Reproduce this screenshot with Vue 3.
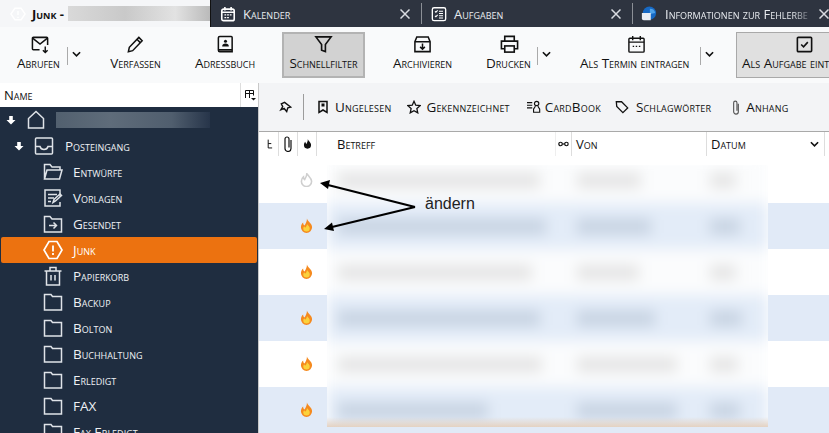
<script setup>
const tree = [
  { name: 'Entwürfe', icon: 'open' },
  { name: 'Vorlagen', icon: 'tpl' },
  { name: 'Gesendet', icon: 'sent' },
  { name: 'Junk', icon: 'junk', active: true },
  { name: 'Papierkorb', icon: 'trash' },
  { name: 'Backup', icon: 'folder' },
  { name: 'Bolton', icon: 'folder' },
  { name: 'Buchhaltung', icon: 'folder' },
  { name: 'Erledigt', icon: 'folder' },
  { name: 'FAX', icon: 'folder' },
  { name: 'Fax Erledigt', icon: 'folder' }
]
const rows = [0, 1, 2, 3, 4, 5]
const bars = [
  { s: 202, f: 64, d: 26, alt: false },
  { s: 208, f: 74, d: 30, alt: true },
  { s: 194, f: 62, d: 26, alt: false },
  { s: 202, f: 78, d: 32, alt: true },
  { s: 204, f: 100, d: 28, alt: false },
  { s: 150, f: 100, d: 30, alt: true }
]
</script>

<template>
  <div class="app">
    <header class="tabs">
      <div class="tab first">
        <svg class="ic" viewBox="0 0 18 18" fill="none" stroke="#fff" stroke-width="1.6"><path d="M5.5 2.5h7L17 9l-4.500 6.500h-7L1 9z"/><path d="M9 5.500v4.500M9 12v1.500"/></svg>
        <b>Junk -</b>
        <span class="smear"></span>
      </div>
      <div class="tab t2">
        <svg class="ic" viewBox="0 0 18 18" fill="none" stroke="#fff" stroke-width="1.800"><rect x="2" y="3.500" width="14" height="13" rx="2"/><path d="M5.500 1v4M12.500 1v4M2 7h14" /><path d="M5 10h2M8 10h2M11 10h2M5 13h2M8 13h2" stroke-width="1.500"/></svg>
        <span class="tname">Kalender</span>
        <svg class="x" viewBox="0 0 10 10" fill="none" stroke="#d8dbe0" stroke-width="1.500"><path d="M.5.5l9 9M9.500.5l-9 9"/></svg>
      </div>
      <div class="tab t3">
        <svg class="ic" viewBox="0 0 18 18" fill="none" stroke="#fff" stroke-width="1.500"><rect x="1.500" y="2" width="15" height="14.500" rx="2"/><path d="M4.500 6l1 1 2-2M9 6h4.500M4.500 11l1 1 2-2M9 11h4.500M9 8.500h4.500M9 13.500h4.500" stroke-width="1.200"/></svg>
        <span class="tname">Aufgaben</span>
        <svg class="x" viewBox="0 0 10 10" fill="none" stroke="#d8dbe0" stroke-width="1.500"><path d="M.5.5l9 9M9.500.5l-9 9"/></svg>
      </div>
      <div class="tab t4">
        <svg class="ic" viewBox="0 0 18 18"><circle cx="9.500" cy="8" r="7.500" fill="#1769c4"/><path d="M10 3a6 6 0 0 1 6 5l-6 1z" fill="#4fa3ea"/><path d="M1 8h10v8H3a2 2 0 0 1-2-2z" fill="#e9edf3"/></svg>
        <span class="tname fade">Informationen zur Fehlerbe</span>
        <svg class="x" viewBox="0 0 10 10" fill="none" stroke="#d8dbe0" stroke-width="1.500"><path d="M.5.5l9 9M9.500.5l-9 9"/></svg>
      </div>
    </header>

    <nav class="toolbar">
      <div class="tb tb-abrufen">
        <svg class="tbi" viewBox="0 0 20 20" fill="none" stroke="#111" stroke-width="1.600"><path d="M9 15.500H2.500a1 1 0 0 1-1-1V3.500a1 1 0 0 1 1-1h14a1 1 0 0 1 1 1v7"/><path d="M2 3.500l7.500 6 7.500-6"/><path d="M15 12v6M12.500 16l2.500 2.500 2.500-2.500" stroke-width="1.500"/></svg>
        <span>Abrufen</span>
      </div>
      <div class="drop"><svg viewBox="0 0 10 6" fill="none" stroke="#111" stroke-width="1.800"><path d="M1 1l4 4 4-4"/></svg></div>
      <div class="tb tb-verfassen">
        <svg class="tbi" viewBox="0 0 20 20" fill="none" stroke="#111" stroke-width="1.600"><path d="M13.500 2.500l3.500 3.500L7 16.500l-4.500 1 1-4.500zM11.500 4.500l3.500 3.500"/></svg>
        <span>Verfassen</span>
      </div>
      <div class="tb tb-adress">
        <svg class="tbi" viewBox="0 0 20 20" fill="none" stroke="#111" stroke-width="1.600"><path d="M4 1.500h12a1 1 0 0 1 1 1v15H4a1.500 1.500 0 0 1-1.500-1.500V3A1.500 1.500 0 0 1 4 1.500zM2.500 15.500h14.500"/><circle cx="10" cy="6.500" r="1.600" fill="#111" stroke="none"/><path d="M6.500 12c0-2 1.500-3 3.500-3s3.500 1 3.500 3z" fill="#111" stroke="none"/></svg>
        <span>Adressbuch</span>
      </div>
      <div class="tb tb-filter">
        <svg class="tbi" viewBox="0 0 20 20" fill="none" stroke="#111" stroke-width="1.700"><path d="M2 2h16l-6 8v7.500l-4-1.500V10z"/></svg>
        <span>Schnellfilter</span>
      </div>
      <div class="tb tb-arch">
        <svg class="tbi" viewBox="0 0 20 20" fill="none" stroke="#111" stroke-width="1.600"><path d="M4 2h12l2 5v10.500H2V7zM2 7h16"/><path d="M10 9v6M7.500 12.500l2.500 2.500 2.500-2.500"/></svg>
        <span>Archivieren</span>
      </div>
      <div class="tb tb-druck">
        <svg class="tbi" viewBox="0 0 20 20" fill="none" stroke="#111" stroke-width="1.700"><path d="M5 6V1.500h10V6M5 14.500H1.500V6.500h17v8H15"/><rect x="5" y="11.500" width="10" height="6.500"/></svg>
        <span>Drucken</span>
      </div>
      <div class="drop"><svg viewBox="0 0 10 6" fill="none" stroke="#111" stroke-width="1.800"><path d="M1 1l4 4 4-4"/></svg></div>
      <div class="tb tb-termin">
        <svg class="tbi" viewBox="0 0 20 20" fill="none" stroke="#111" stroke-width="1.500"><rect x="2" y="3.500" width="16" height="14.500" rx="1"/><path d="M6 1v4.500M14 1v4.500M2 7.500h16"/><path d="M6 12h1.500M9.200 12h1.500M12.500 12h1.500"/></svg>
        <span>Als Termin eintragen</span>
      </div>
      <div class="drop"><svg viewBox="0 0 10 6" fill="none" stroke="#111" stroke-width="1.800"><path d="M1 1l4 4 4-4"/></svg></div>
      <div class="tb tb-aufgabe">
        <svg class="tbi" viewBox="0 0 20 20" fill="none" stroke="#111" stroke-width="1.700"><rect x="2.500" y="2.500" width="15" height="15" rx="1"/><path d="M6.500 10l2.500 2.500 4.500-5"/></svg>
        <span>Als Aufgabe eint</span>
      </div>
    </nav>

    <main class="body">
      <aside class="side">
        <div class="side-head">
          <span>Name</span>
          <svg class="sh-ic" viewBox="0 0 12 12" fill="none" stroke="#111"><path d="M1.500 9V1.500h8v5M1.500 4.500h8M5.500 1.500v7.500"/><path d="M7 9h5l-2.500 2.500z" fill="#111" stroke="none"/></svg>
        </div>
        <div class="tree">
          <div class="node n0">
            <svg class="arrow" viewBox="0 0 10 10" fill="#fff"><path d="M3.200 1h3.600v4H9.500L5 9.500.5 5h2.700z"/></svg>
            <svg class="fi home" viewBox="0 0 20 20" fill="none" stroke="#dfe3e8" stroke-width="1.500"><path d="M2.500 18V8.500L10 1.500l7.500 7V18z"/></svg>
            <span class="acct"></span>
          </div>
          <div class="node n1">
            <svg class="arrow" viewBox="0 0 10 10" fill="#fff"><path d="M3.200 1h3.600v4H9.500L5 9.500.5 5h2.700z"/></svg>
            <svg class="fi" viewBox="0 0 20 20" fill="none" stroke="#dfe3e8" stroke-width="1.500"><rect x="1.500" y="2" width="17" height="16" rx="1"/><path d="M1.500 10.500H6c.5 2 2 3 4 3s3.500-1 4-3h4.500"/></svg>
            <span>Posteingang</span>
          </div>
          <div v-for="f in tree" :key="f.name" class="node n2" :class="{ active: f.active }">
            <svg class="fi" viewBox="0 0 20 20" fill="none" stroke="#dfe3e8" stroke-width="1.500">
              <template v-if="f.icon === 'open'"><path d="M1.500 17V2.500h5.500l2 2.500h8v3M1.500 17l2.500-9h15l-2.500 9z"/></template>
              <template v-else-if="f.icon === 'tpl'"><path d="M17 8.500V2H2v16h15v-4M5 6.500h9M5 10h6M5 13.500h3"/><path d="M10 14.500l1-3 6-5.500 1.500 1.500-6 5.500z"/></template>
              <template v-else-if="f.icon === 'sent'"><path d="M1.500 18V2.500h5.500l2 2.500h9.500v13z"/><path d="M6 11.500h7M10.500 8.500l3 3-3 3"/></template>
              <template v-else-if="f.icon === 'junk'"><path d="M6 1.500h8L19 10l-5 8.500H6L1 10z" stroke="#fff" stroke-width="1.700"/><path d="M10 5.500v6M10 13v2" stroke="#fff" stroke-width="1.800"/></template>
              <template v-else-if="f.icon === 'trash'"><path d="M1.500 5h17M7 5V1.500h6V5M3.500 5v14h13V5M8 9v5.500M12 9v5.500"/></template>
              <template v-else><path d="M1.500 18V2.500h6.500l1.500 2h9v13.500z"/></template>
            </svg>
            <span>{{ f.name }}</span>
          </div>
        </div>
      </aside>

      <section class="list">
        <div class="filter">
          <svg class="fb-pin" viewBox="0 0 14 14" fill="none" stroke="#111" stroke-width="1.500"><path d="M6 1.500l6.500 5-3 .8-1.200 4L5.500 8 2 9.500 4 6 2.500 3z"/></svg>
          <span class="fb-sep"></span>
          <div class="fb f1"><svg viewBox="0 0 14 14" fill="none" stroke="#111" stroke-width="1.500"><path d="M3 1.500h8v11l-4-2.500-4 2.500z"/><rect x="5.500" y="3.500" width="3" height="3" fill="#111" stroke="none"/></svg><span>Ungelesen</span></div>
          <div class="fb f2"><svg viewBox="0 0 16 16" fill="none" stroke="#111" stroke-width="1.500"><path d="M8 1.500l2 4.500 5 .5-3.700 3.300 1 4.900L8 12.300 3.700 14.700l1-4.900L1 6.500 6 6z"/></svg><span>Gekennzeichnet</span></div>
          <div class="fb f3"><svg viewBox="0 0 16 16" fill="none" stroke="#111" stroke-width="1.300"><path d="M0 3h6M0 6h6M0 9h6"/><circle cx="11" cy="4" r="2.500"/><path d="M9.500 6.500c0 2-2 3-2 4v3.500h7V10.500c0-1-2-2-2-4"/></svg><span>CardBook</span></div>
          <div class="fb f4"><svg viewBox="0 0 16 16" fill="none" stroke="#111" stroke-width="1.500"><path d="M1.500 2h6l7 7-5.500 5.500-7-7z"/></svg><span>Schlagwörter</span></div>
          <div class="fb f5"><svg viewBox="0 0 10 16" fill="none" stroke="#555" stroke-width="1.200"><path d="M7.500 4v8.500a2.500 2.500 0 0 1-5 0V3a1.700 1.700 0 0 1 3.500 0v8.500"/></svg><span>Anhang</span></div>
        </div>

        <div class="thead">
          <div class="th c-th"><svg viewBox="0 0 8 10" fill="none" stroke="#111" stroke-width="1.100"><path d="M2.500 0v9.500H7M2.500 4.500H6"/></svg></div>
          <div class="th c-cl"><svg viewBox="0 0 10 16" fill="none" stroke="#111" stroke-width="1.200"><path d="M8 4v8.500a3 3 0 0 1-6 0V3a2 2 0 0 1 4 0v8.500"/></svg></div>
          <div class="th c-fl"><svg viewBox="0 0 12 14" fill="#111"><path d="M6.500 0c.5 3 4.500 4.500 4.500 8.500a5 5 0 0 1-10 0C1 6.500 2 5 3 4c0 1.500.5 2.500 1.500 3C5.500 5 6.500 3 6.500 0z"/></svg></div>
          <div class="th c-su">Betreff</div>
          <div class="th c-gl"><svg viewBox="0 0 12 6" fill="none" stroke="#111" stroke-width="1.300"><circle cx="2.800" cy="3" r="1.900"/><circle cx="9.200" cy="3" r="1.900"/><path d="M4.700 3h2.600"/></svg></div>
          <div class="th c-vo">Von</div>
          <div class="th c-da">Datum
            <svg viewBox="0 0 10 6" fill="none" stroke="#111" stroke-width="1.800"><path d="M1 1l4 4 4-4"/></svg>
          </div>
        </div>

        <div class="rows">
          <div v-for="r in rows" :key="r" class="row" :class="{ alt: r % 2 === 1 }">
            <svg v-if="r === 0" class="flame" viewBox="0 0 14 16" fill="none" stroke="#cfcfcf" stroke-width="1.700"><path d="M7.500 1c.5 3.200 5 4.800 5 9a5.500 5.500 0 0 1-11 0c0-2.200 1-3.800 2.200-4.800 0 1.300.4 2.400 1.300 3C6.200 6.300 7.500 4 7.500 1z"/></svg>
            <svg v-else class="flame" viewBox="0 0 14 16"><path d="M7.500 .5c.5 3.400 5.500 5 5.500 9.500a6 6 0 0 1-12 0c0-2.400 1.100-4.100 2.400-5.200 0 1.400.4 2.600 1.400 3.200C6 6.300 7.500 4 7.500 .5z" fill="#f58a1f"/><path d="M7.500 6.500c1 1.500 3 2.500 3 4.500a3.500 3.500 0 0 1-7 0c0-1 .4-1.700 1-2.300.3.800.8 1.300 1.500 1.500.7-1 1.500-2.200 1.500-3.700z" fill="#fbd23c"/></svg>
          </div>
          <div class="veil">
            <div class="veil-in">
              <div v-for="(b, i) in bars" :key="i" class="vrow" :class="{ alt: b.alt }">
                <span class="vb vs" :style="{ width: b.s + 'px' }"></span>
                <span class="vb vf" :style="{ width: b.f + 'px' }"></span>
                <span class="vb vd" :style="{ width: b.d + 'px' }"></span>
              </div>
            </div>
          </div>
          <svg class="arrows" viewBox="0 0 130 100" fill="none" stroke="#000" stroke-width="2.300">
            <path d="M97 70L8 47.500M97 70L14 90" />
            <path d="M2 46l10-3-2 9zM6 92l8-6.500 2 8.500z" fill="#000" stroke="none"/>
          </svg>
          <span class="note">ändern</span>
        </div>
      </section>
    </main>
  </div>
</template>

<style>
html, body { margin: 0; overflow: hidden; background: #fff; }
</style>

<style scoped>
.app {
  width: 829px;
  height: 433px;
  overflow: hidden;
  display: flex;
  flex-direction: column;
  font-family: "Open Sans", "Noto Sans", sans-serif;
  font-variant: small-caps;
  font-size: 13px;
  color: #111;
}
.tabs { height: 27px; display: flex; background: #2e3440; color: #e8ebef; flex: none; }
.tab { width: 211px; flex: none; display: flex; align-items: center; box-sizing: border-box; position: relative; }
.tab.first { width: 210px; background: #f5f6f8; color: #111; padding-left: 10px; gap: 6px; }
.tab.first b { font-weight: 700; white-space: nowrap; }
.smear { width: 143px; height: 15px; flex: none; margin-left: -2px; background: linear-gradient(90deg, #d9d9d9, #c9c9c9 40%, #e2e2e2 75%, #b9b9b9); }
.ic { width: 16px; height: 16px; flex: none; }
.t2 { padding-left: 9px; border-left: 1px solid #111; }
.t3 { padding-left: 9px; border-left: 1px solid #8b8f96; margin-top: 3px; height: 21px; }
.t4 { padding-left: 8px; border-left: 1px solid #8b8f96; margin-top: 3px; height: 21px; width: 197px; }
.tname { margin-left: 7px; white-space: nowrap; }
.t4 .tname { margin-left: 8px; }
.fade { width: 150px; overflow: hidden; -webkit-mask-image: linear-gradient(90deg, #000 85%, transparent); mask-image: linear-gradient(90deg, #000 85%, transparent); }
.x { position: absolute; right: 11px; top: 50%; width: 10px; height: 10px; margin-top: -5px; }
.t4 .x { right: 0; }

.toolbar { height: 56px; flex: none; background: #f9fafb; display: flex; align-items: center; font-size: 13.5px; }
.tb { display: flex; flex-direction: column; align-items: center; box-sizing: border-box; height: 46px; white-space: nowrap; flex: none; padding-top: 3px; }
.tbi { width: 19px; height: 19px; }
.tb-filter { padding-top: 1px; }
.tb-aufgabe { padding-top: 2px; }
.drop { width: 14px; height: 18px; flex: none; margin-top: 2px; border-left: 1px solid #aaa; display: flex; align-items: flex-start; justify-content: flex-end; padding-top: 4px; box-sizing: border-box; }
.drop svg { width: 9px; height: 6px; }
.tb-abrufen { width: 50px; margin-left: 17px; align-items: flex-start; }
.tb-abrufen .tbi { margin-left: 14px; }
.tb-verfassen { margin-left: 29px; width: 51px; }
.tb-adress { margin-left: 33px; width: 62px; }
.tb-filter { margin-left: 26px; width: 83px; background: #d2d2d2; border: 2px solid #b3b3b3; }
.tb-arch { margin-left: 26px; width: 63px; }
.tb-druck { margin-left: 32px; width: 51px; align-items: flex-start; }
.tb-druck .tbi { margin-left: 14px; }
.tb-termin { margin-left: 29px; width: 120px; align-items: flex-start; }
.tb-termin .tbi { margin-left: 47px; }
.tb-aufgabe { margin-left: 22px; width: 120px; background: #e0e0e0; border: 1px solid #a9a9a9; align-items: flex-start; padding-left: 5px; }
.tb-aufgabe .tbi { margin-left: 53px; }

.body { flex: 1; display: flex; min-height: 0; }
.side { width: 258px; flex: none; display: flex; flex-direction: column; background: #1f2d40; }
.side-head { height: 24px; flex: none; background: #fff; display: flex; align-items: center; justify-content: space-between; padding-left: 4px; padding-right: 2px; box-sizing: border-box; position: relative; }
.side-head::after { content: ""; position: absolute; left: 240px; top: 0; bottom: 0; width: 1px; background: #ddd; }
.sh-ic { width: 12px; height: 12px; }
.tree { color: #eef1f4; flex: 1; font-size: 13.5px; }
.node { height: 26px; display: flex; align-items: center; white-space: nowrap; box-sizing: border-box; }
.n0 { padding-left: 6px; }
.n1 { padding-left: 14px; }
.n2 { padding-left: 43px; }
.arrow { width: 10px; height: 10px; flex: none; margin-right: 10px; }
.fi { width: 20px; height: 20px; flex: none; margin-right: 10px; }
.n1 .fi { margin-right: 11px; }
.acct { width: 154px; height: 16px; background: linear-gradient(90deg, #52606f, #5f6c7a 35%, #505e6e 75%, #27354a); }
.node.active { background: #ec7210; margin-left: 1px; width: 256px; padding-left: 42px; border-radius: 2px; color: #fff; }

.list { flex: 1; min-width: 0; display: flex; flex-direction: column; border-left: 1px solid #c8c8c8; box-sizing: border-box; }
.filter { height: 49px; flex: none; background: #f3f4f6; border-bottom: 1px solid #a9a9a9; box-sizing: border-box; display: flex; align-items: center; font-size: 13.5px; letter-spacing: .2px; }
.fb-pin { width: 13px; height: 13px; margin-left: 20px; flex: none; }
.fb-sep { width: 1px; height: 26px; background: #9c9c9c; margin-left: 11px; flex: none; }
.fb { display: flex; align-items: center; gap: 5px; white-space: nowrap; flex: none; }
.fb svg { width: 14px; height: 14px; flex: none; }
.f1 { margin-left: 12px; }
.f2 { margin-left: 16px; gap: 5px; }
.f3 { margin-left: 17px; gap: 4px; }
.f4 { margin-left: 14px; gap: 7px; }
.f5 { margin-left: 20px; gap: 5px; }
.f5 svg { width: 10px; height: 15px; }

.thead { height: 25px; flex: none; display: flex; background: #fff; }
.th { height: 24px; display: flex; align-items: center; border-right: 1px solid #ddd; box-sizing: border-box; flex: none; }
.c-th { width: 20px; justify-content: center; padding-left: 2px; }
.c-th svg { width: 7px; height: 10px; }
.c-cl { width: 19px; justify-content: center; }
.c-cl svg { width: 10px; height: 16px; }
.c-fl { width: 19px; justify-content: center; }
.c-fl svg { width: 9px; height: 10px; }
.c-su { width: 239px; padding-left: 20px; border-right: 1px solid #eee; }
.c-gl { width: 16px; justify-content: center; }
.c-gl svg { width: 11px; height: 6px; }
.c-vo { width: 135px; padding-left: 4px; }
.c-da { width: 118px; padding-left: 4px; justify-content: space-between; padding-right: 5px; }
.c-da svg { width: 9px; height: 6px; }

.rows { flex: 1; position: relative; overflow: hidden; }
.row { height: 46px; display: flex; align-items: center; background: #fff; }
.row.alt { background: #e1eaf7; }
.flame { width: 13px; height: 15px; margin-left: 41px; margin-top: -2px; flex: none; }

.veil { position: absolute; left: 68px; top: 8px; width: 441px; height: 262px; overflow: hidden; background: #fff; }
.veil::after { content: ""; position: absolute; left: 0; right: 0; bottom: 0; height: 10px; background: linear-gradient(180deg, rgba(230, 211, 196, 0), #e4d2c2); }
.veil-in { margin-top: -8px; filter: blur(7px); }
.vrow { height: 46px; display: flex; align-items: center; background: #fbfcfd; position: relative; }
.vrow.alt { background: #e3ecf8; }
.vb { height: 15px; background: #e4e4e4; flex: none; }
.vrow.alt .vb { background: #c6d2e1; }
.vs { margin-left: 11px; }
.vrow .vf { position: absolute; left: 250px; }
.vrow .vd { position: absolute; left: 383px; }

.arrows { position: absolute; left: 59px; top: -20px; width: 130px; height: 100px; }
.note { position: absolute; left: 166px; top: 38px; font-family: "Liberation Sans", Arial, sans-serif; font-variant: normal; font-size: 16px; color: #222; }
</style>
